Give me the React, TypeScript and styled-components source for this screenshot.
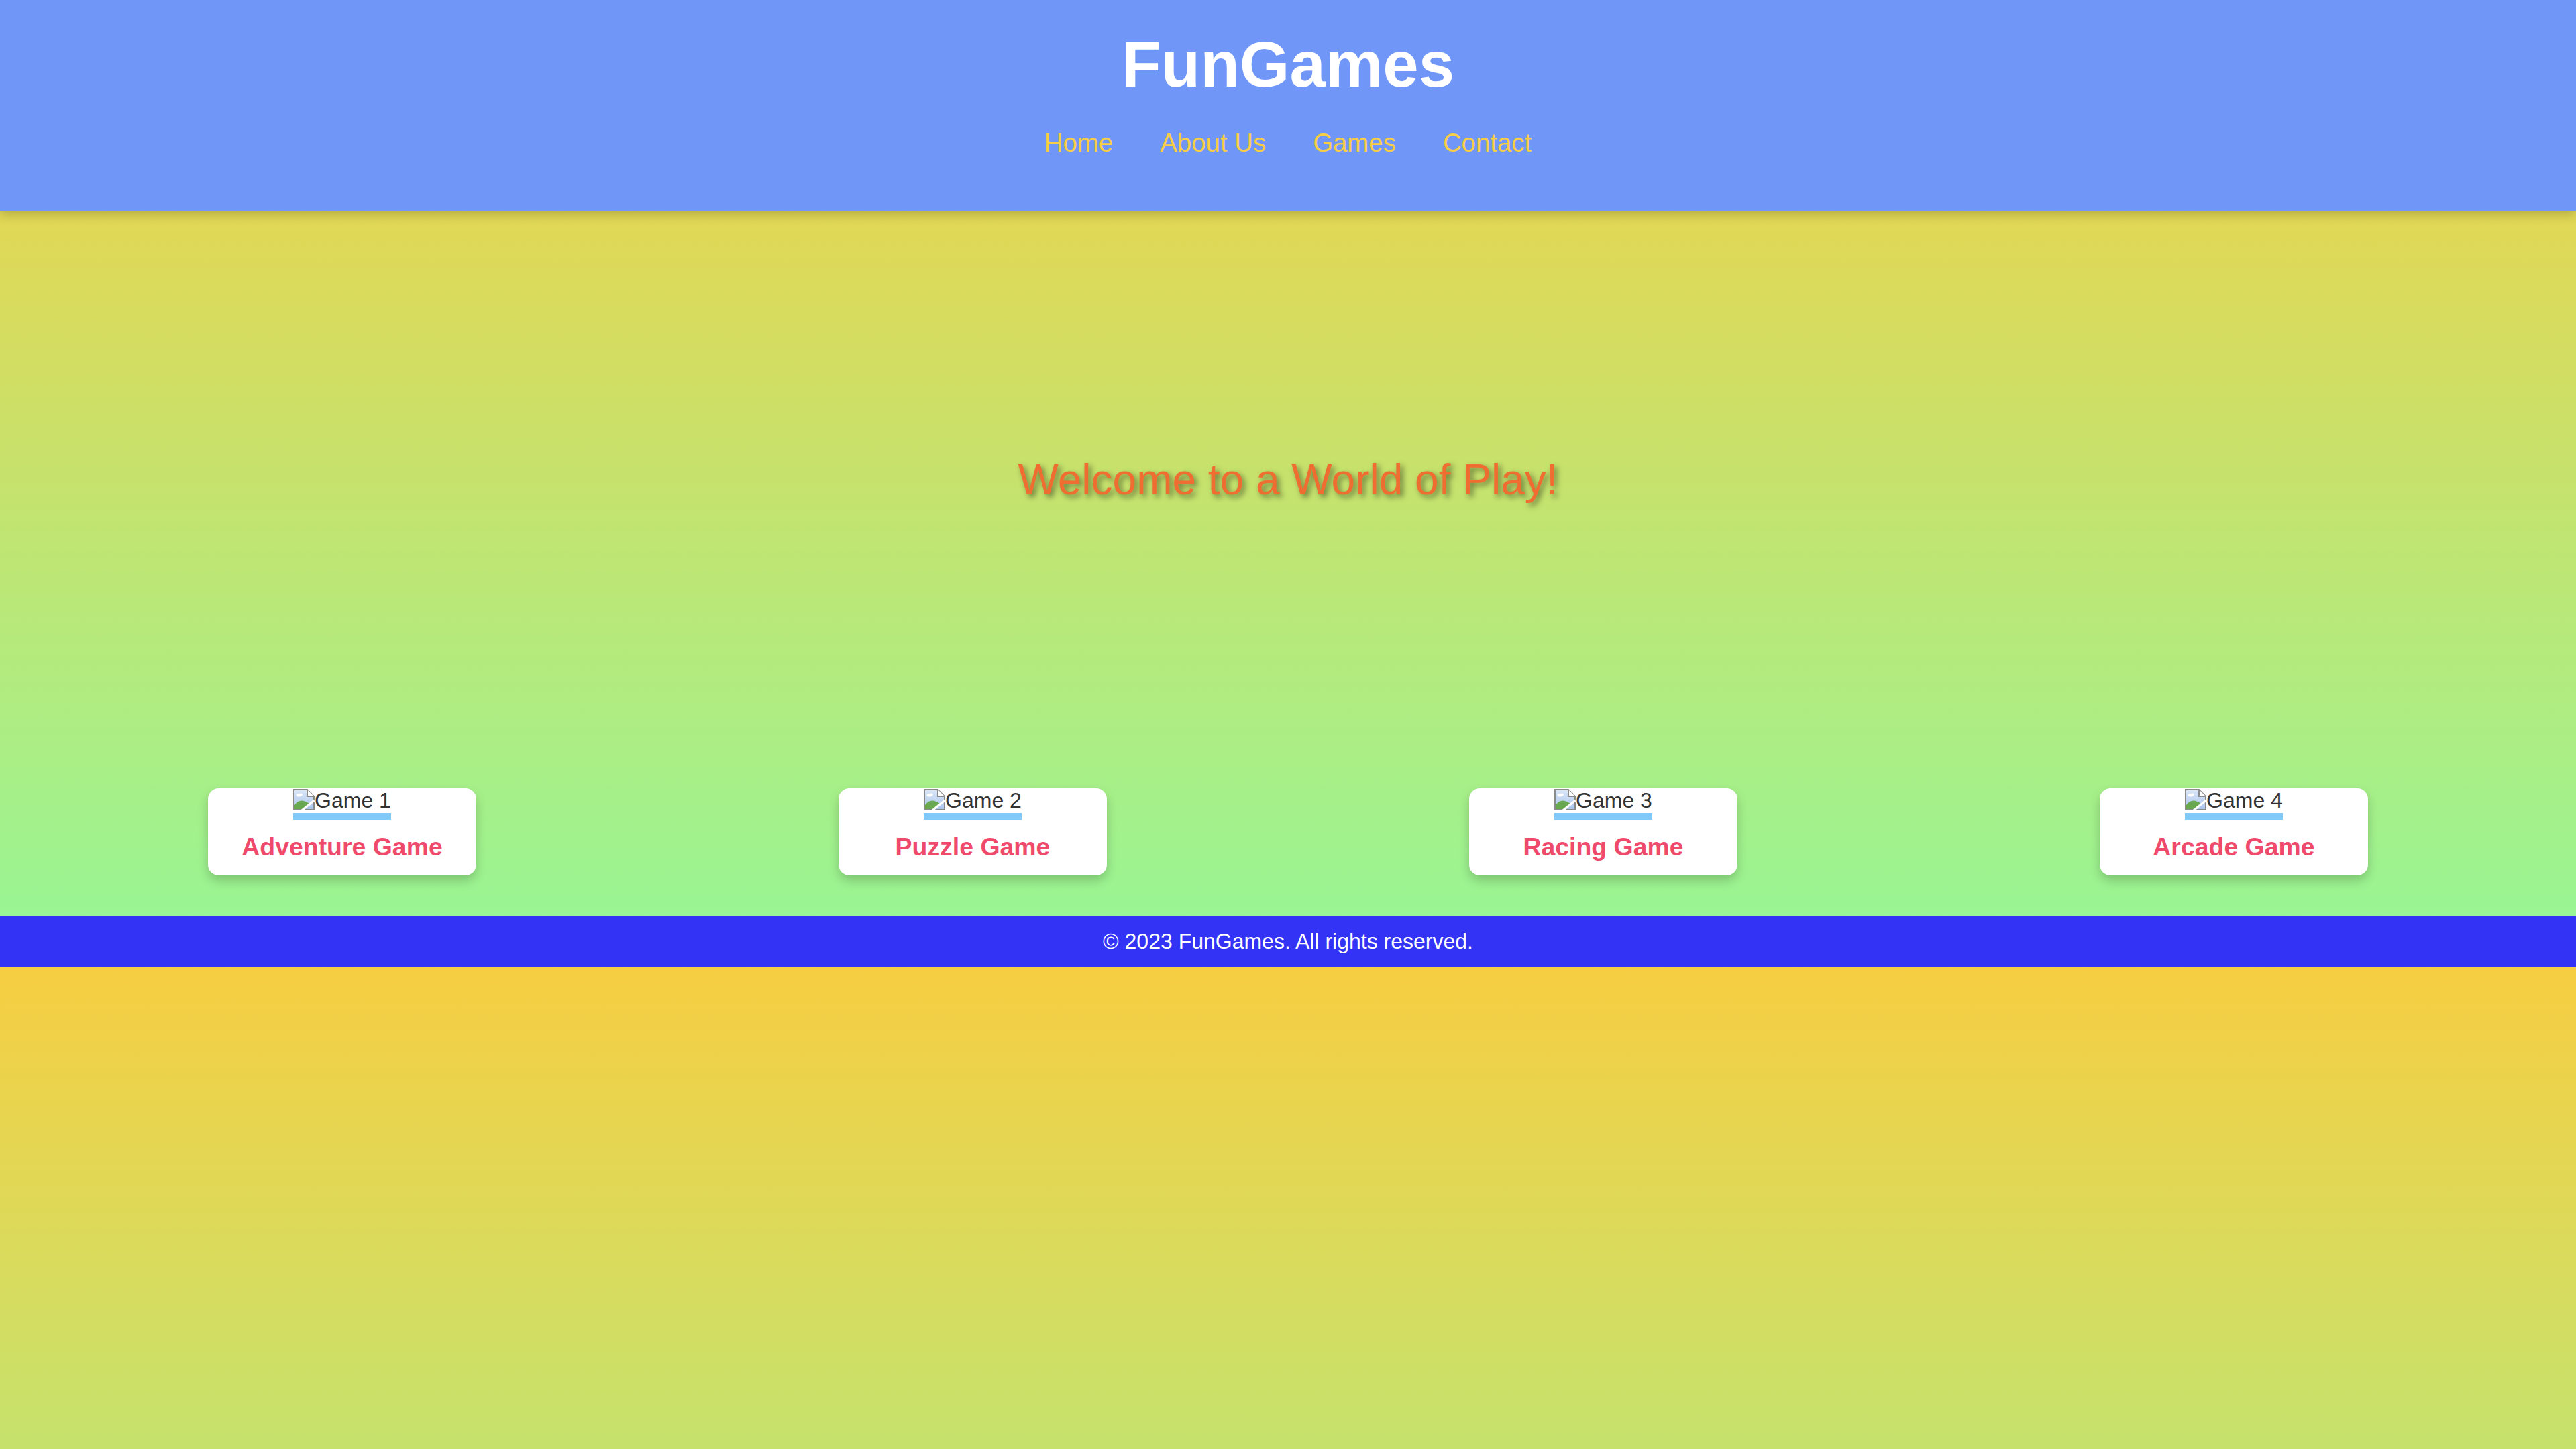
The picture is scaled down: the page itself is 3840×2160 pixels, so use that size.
import React from "react";
import styled, { createGlobalStyle } from "styled-components";

const GlobalStyle = createGlobalStyle`
  body {
    margin: 0;
    font-family: "Liberation Sans", Arial, sans-serif;
    color: #333;
    background: linear-gradient(to bottom, #f7ce42, #94f798);
  }
`;

const Header = styled.header`
  background: #7097f7;
  padding: 41px 0 80px;
  text-align: center;
  box-shadow: 0 4px 16px rgba(0, 0, 0, 0.22);
  position: relative;
  z-index: 1;
`;

const Title = styled.h1`
  margin: 0 0 40px;
  font-size: 96px;
  font-weight: bold;
  color: #ffffff;
  line-height: normal;
`;

const NavList = styled.ul`
  list-style: none;
  margin: 0;
  padding: 0;
  display: flex;
  justify-content: center;
  gap: 70px;
`;

const NavLink = styled.a`
  color: #f7ce46;
  text-decoration: none;
  font-size: 38.4px;
  line-height: normal;
`;

const Hero = styled.section`
  height: 800px;
  display: flex;
  align-items: center;
  justify-content: center;
`;

const HeroText = styled.h2`
  margin: 0;
  font-size: 64px;
  font-weight: normal;
  color: #ef6d30;
  text-shadow: 4px 4px 8px rgba(0, 0, 0, 0.5);
`;

const Games = styled.section`
  display: flex;
  justify-content: space-around;
  padding: 60px 40px;
`;

const Card = styled.div`
  width: 400px;
  background: #ffffff;
  border-radius: 16px;
  box-shadow: 0 8px 16px rgba(0, 0, 0, 0.2);
  text-align: center;
`;

const ImageBox = styled.span`
  display: inline-flex;
  align-items: flex-start;
  border-bottom: 10px solid #81c9f9;
  font-size: 32px;
  line-height: 37px;
  color: #333;
  vertical-align: top;
`;

const BrokenIcon = styled.svg`
  width: 32px;
  height: 32px;
  flex: none;
  margin-top: 1px;
`;

const CardTitle = styled.h3`
  margin: 19px 0 21px;
  font-size: 37.44px;
  font-weight: bold;
  color: #ef4a6c;
  line-height: normal;
`;

const Footer = styled.footer`
  background: #3333f5;
  color: #ffffff;
  text-align: center;
  padding: 20px;
  font-size: 32px;
  line-height: normal;
`;

const BrokenImage: React.FC<{ alt: string }> = ({ alt }) => (
  <ImageBox role="img" aria-label={alt}>
    <BrokenIcon viewBox="0 0 16 16" aria-hidden="true">
      <defs>
        <linearGradient id="sky" x1="0" y1="0" x2="0" y2="1">
          <stop offset="0" stopColor="#dbe7f8" />
          <stop offset="1" stopColor="#a9c3ec" />
        </linearGradient>
      </defs>
      <path d="M0.5 0.5 H10.5 L15.5 5.5 V15.5 H0.5 Z" fill="url(#sky)" stroke="#8a8a8a" strokeWidth="1" />
      <ellipse cx="4.2" cy="4.6" rx="1.9" ry="1.1" fill="#ffffff" />
      <ellipse cx="5.6" cy="4.2" rx="1.3" ry="1" fill="#ffffff" />
      <path d="M1 15 V12 Q4 8 8 9 Q10.5 9.8 12 11 L8 15 Z" fill="#6aa84f" />
      <path d="M10.5 0.5 V5.5 H15.5" fill="#ffffff" stroke="#8a8a8a" strokeWidth="1" />
      <path d="M6.5 16 L15.8 8.5" stroke="#ffffff" strokeWidth="1.6" />
    </BrokenIcon>
    {alt}
  </ImageBox>
);

const games = [
  { img: "Game 1", title: "Adventure Game" },
  { img: "Game 2", title: "Puzzle Game" },
  { img: "Game 3", title: "Racing Game" },
  { img: "Game 4", title: "Arcade Game" },
];

export default function App() {
  return (
    <>
      <GlobalStyle />
      <Header>
        <Title>FunGames</Title>
        <nav>
          <NavList>
            <li><NavLink href="#">Home</NavLink></li>
            <li><NavLink href="#">About Us</NavLink></li>
            <li><NavLink href="#">Games</NavLink></li>
            <li><NavLink href="#">Contact</NavLink></li>
          </NavList>
        </nav>
      </Header>
      <main>
        <Hero>
          <HeroText>Welcome to a World of Play!</HeroText>
        </Hero>
        <Games>
          {games.map((g) => (
            <Card key={g.title}>
              <BrokenImage alt={g.img} />
              <CardTitle>{g.title}</CardTitle>
            </Card>
          ))}
        </Games>
      </main>
      <Footer>© 2023 FunGames. All rights reserved.</Footer>
    </>
  );
}
